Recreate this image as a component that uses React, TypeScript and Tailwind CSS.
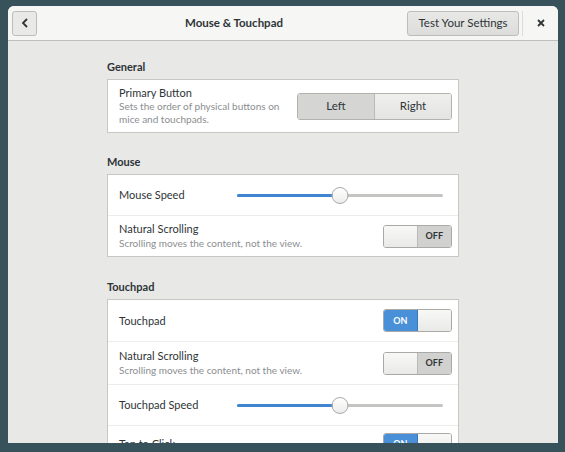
import React from "react";

function Switch({ on }: { on: boolean }) {
  return (
    <div className="flex h-[23px] w-[69px] overflow-hidden rounded-[3px] border border-[#a9aaa7] text-[9px] font-bold">
      {on ? (
        <>
          <div className="flex w-1/2 items-center justify-center border-r border-[#3a78b9] bg-[#4a90d9] text-white">ON</div>
          <div className="w-1/2 bg-gradient-to-b from-[#f8f8f7] to-[#e9e9e8]" />
        </>
      ) : (
        <>
          <div className="w-1/2 border-r border-[#b9bab7] bg-gradient-to-b from-[#f8f8f7] to-[#e9e9e8]" />
          <div className="flex w-1/2 items-center justify-center bg-[#d1d1cf] text-[#2e3436]">OFF</div>
        </>
      )}
    </div>
  );
}

function Slider({ value }: { value: number }) {
  return (
    <div className="relative h-[17px] w-[206px]">
      <div className="absolute left-0 right-0 top-[7px] h-[3px] rounded-full bg-[#c4c4c2]" />
      <div className="absolute left-0 top-[7px] h-[3px] rounded-full bg-[#3f85d2]" style={{ width: `${value}%` }} />
      <div
        className="absolute top-0 h-[17px] w-[17px] -translate-x-1/2 rounded-full border border-[#a9aaa7] bg-gradient-to-b from-white to-[#ececeb]"
        style={{ left: `${value}%` }}
      />
    </div>
  );
}

function Row({ title, sub, children, h, last }: { title: string; sub?: string; children: React.ReactNode; h: string; last?: boolean }) {
  return (
    <div className={`flex items-center justify-between pl-[11px] pr-[6px] ${h} ${last ? "" : "border-b border-[#ececeb]"}`}>
      <div className="leading-[14px]">
        <div className="text-[11px] text-[#2e3436]">{title}</div>
        {sub && <div className="text-[10px] text-[#8b8e8f]">{sub}</div>}
      </div>
      {children}
    </div>
  );
}

export default function App() {
  return (
    <div className="h-[452px] w-[565px] overflow-hidden bg-[#37525b] pl-[8px] pt-[6px]" style={{ fontFamily: 'Lato, "Open Sans", sans-serif' }}>
      <div className="flex h-[437px] w-[550px] flex-col overflow-hidden rounded-t-[6px] bg-[#e8e8e7]">
        <div className="flex h-[35px] shrink-0 items-center border-b border-[#bfbfbc] bg-[#f6f6f5] pl-[4px]">
          <button className="flex h-[25px] w-[25px] items-center justify-center rounded-[3px] border border-[#bdbdba] bg-[#e9e9e8]">
            <svg width="8" height="10" viewBox="0 0 8 10">
              <path d="M6 1 L2 5 L6 9" fill="none" stroke="#2e3436" strokeWidth="1.8" />
            </svg>
          </button>
          <div className="flex-1 pl-[24px] text-center text-[11.5px] font-bold text-[#2e3436]">Mouse &amp; Touchpad</div>
          <button className="h-[25px] w-[112px] rounded-[3px] border border-[#bdbdba] bg-gradient-to-b from-[#e8e8e7] to-[#dcdcda] text-[11.5px] text-[#2e3436]">
            Test Your Settings
          </button>
          <div className="ml-[3px] h-[25px] w-px bg-[#dcdcda]" />
          <div className="flex w-[35px] items-center justify-center">
            <svg width="8" height="8" viewBox="0 0 8 8">
              <path d="M1 1 L7 7 M7 1 L1 7" stroke="#2e3436" strokeWidth="1.8" />
            </svg>
          </div>
        </div>
        <div className="mx-auto w-[352px] pt-[18px]">
          <div className="mb-[4px] text-[11px] font-bold leading-[16px] text-[#2e3436]">General</div>
          <div className="flex h-[54px] items-center justify-between border border-[#c7c7c4] bg-white pl-[11px] pr-[6px]">
            <div className="leading-[13px]">
              <div className="mb-[1px] text-[11px] text-[#2e3436]">Primary Button</div>
              <div className="w-[170px] text-[10px] text-[#8b8e8f]">Sets the order of physical buttons on mice and touchpads.</div>
            </div>
            <div className="flex h-[27px] w-[155px] overflow-hidden rounded-[3px] border border-[#b2b2af] text-[11.5px] text-[#2e3436]">
              <div className="flex flex-1 items-center justify-center border-r border-[#b9bab7] bg-[#d5d5d3]">Left</div>
              <div className="flex flex-1 items-center justify-center bg-gradient-to-b from-[#efefee] to-[#e4e4e3]">Right</div>
            </div>
          </div>

          <div className="mb-[4px] mt-[21px] text-[11px] font-bold leading-[16px] text-[#2e3436]">Mouse</div>
          <div className="border border-[#c7c7c4] bg-white">
            <Row title="Mouse Speed" h="h-[41px]">
              <div className="mr-[9px]">
                <Slider value={50} />
              </div>
            </Row>
            <Row title="Natural Scrolling" sub="Scrolling moves the content, not the view." h="h-[40px]" last>
              <Switch on={false} />
            </Row>
          </div>

          <div className="mb-[4px] mt-[22px] text-[11px] font-bold leading-[16px] text-[#2e3436]">Touchpad</div>
          <div className="border border-[#c7c7c4] bg-white">
            <Row title="Touchpad" h="h-[42px]">
              <Switch on />
            </Row>
            <Row title="Natural Scrolling" sub="Scrolling moves the content, not the view." h="h-[43px]">
              <Switch on={false} />
            </Row>
            <Row title="Touchpad Speed" h="h-[41px]">
              <div className="mr-[9px]">
                <Slider value={50} />
              </div>
            </Row>
            <Row title="Tap to Click" h="h-[36px]" last>
              <Switch on />
            </Row>
          </div>
        </div>
      </div>
    </div>
  );
}
